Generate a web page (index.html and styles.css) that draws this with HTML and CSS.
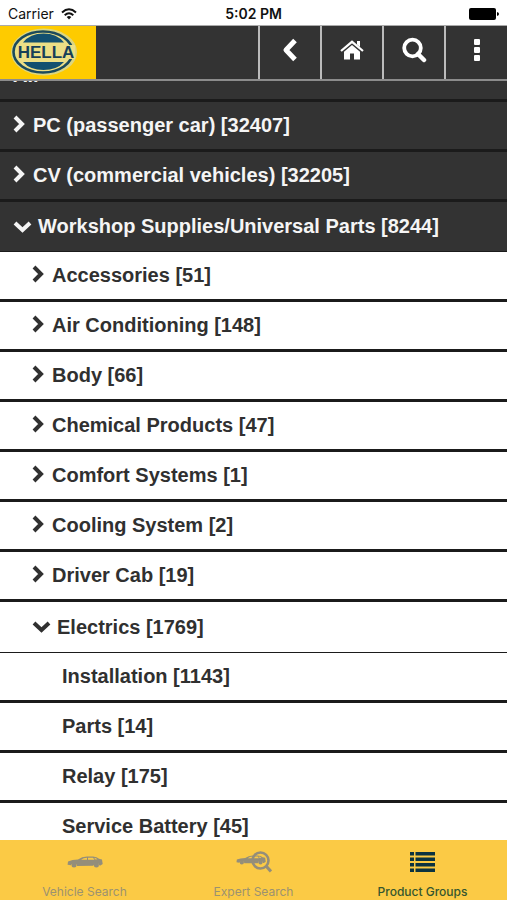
FILE: index.html
```html
<!DOCTYPE html>
<html lang="en">
<head>
<meta charset="utf-8">
<meta name="viewport" content="width=device-width, initial-scale=1">
<title>Product Groups</title>
<link rel="stylesheet" href="styles.css">
</head>
<body>
<svg width="0" height="0" class="defs" aria-hidden="true">
  <symbol id="right" viewBox="0 0 12 18"><path d="M2 2l7 7-7 7" fill="none" stroke="currentColor" stroke-width="4"/></symbol>
  <symbol id="down" viewBox="0 0 18 12"><path d="M1.500 2l7.500 7 7.500-7" fill="none" stroke="currentColor" stroke-width="4"/></symbol>
  <symbol id="car" viewBox="0 0 36 12"><path fill="currentColor" fill-rule="evenodd" d="M1 5.500Q5 3.800 11 3.600Q15 .6 20 .6H26Q30 .8 32 2.800L35 3.400L35.700 8L33.500 9.600H32.500A3.200 3.200 0 0 0 26.300 9.800L10.100 10A3.200 3.200 0 0 0 3.900 9.300L.6 8.800ZM14 3.800H20V1.700Q16.500 1.900 14 3.800ZM21 1.700V3.800H27.500L26 1.800ZM27 1.800L28.500 3.600L30.500 3.200Q29 1.900 27 1.800Z"/><circle cx="7" cy="9" r="2.500" fill="currentColor"/><circle cx="29.400" cy="9" r="2.500" fill="currentColor"/></symbol>
</svg>
<div class="status">
  <span class="carrier">Carrier
    <svg width="16" height="12" viewBox="0 0 16 12"><g fill="none" stroke="#111" stroke-width="2"><path d="M1 4.400Q8-1.800 15 4.400"/><path d="M3.700 7.200Q8 3.300 12.300 7.200"/></g><path d="M5.700 9Q8 7.200 10.300 9L8 11.500Z" fill="#111"/></svg>
  </span>
  <span class="clock">5:02 PM</span>
  <svg class="battery" width="30" height="12" viewBox="0 0 30 12"><rect x="0" y="0" width="27" height="12" rx="2"/><path d="M28 4Q30 4.500 30 6T28 8Z"/></svg>
</div>
<header class="bar">
  <a class="logo" href="#" aria-label="Hella">
    <svg width="96" height="54" viewBox="0 0 96 54">
      <ellipse cx="44" cy="26" rx="33" ry="23.500" fill="#dcd680"/>
      <ellipse cx="43" cy="26" rx="29.500" ry="20.500" fill="#ecdf86" stroke="#1b4a5c" stroke-width="2.600"/>
      <path d="M23 16.500Q30 7.500 43.500 7.500T64 16.500ZM23 36Q30 44 43.500 44T64 36Z" fill="#125070"/>
      <path d="M18 19H75V33H18Z" fill="#ecdf86"/>
      <text x="46" y="32" text-anchor="middle" class="brand">HELLA</text>
    </svg>
  </a>
  <button type="button" aria-label="Back"><svg width="18" height="24" viewBox="0 0 18 24"><path d="M14 2.500L5 12l9 9.500" fill="none" stroke="#fff" stroke-width="5" stroke-linejoin="round"/></svg></button>
  <button type="button" aria-label="Home"><svg width="24" height="20" viewBox="0 0 24 20"><path d="M1 11L12 1.800L23 11" fill="none" stroke="#fff" stroke-width="2.200"/><path d="M17 1h3v6l-3-2.500ZM12 5l8 6.700V19.500h-6V13.500h-4v6H4V11.700Z" fill="#fff"/></svg></button>
  <button type="button" aria-label="Search"><svg width="26" height="26" viewBox="0 0 26 26"><circle cx="11.500" cy="11" r="8.300" fill="none" stroke="#fff" stroke-width="3.800"/><path d="M17 17l6 6" stroke="#fff" stroke-width="4.500" stroke-linecap="round"/></svg></button>
  <button type="button" aria-label="More"><svg width="6" height="22" viewBox="0 0 6 22" fill="#fff"><rect width="6" height="6" rx="1"/><rect y="8" width="6" height="6" rx="1"/><rect y="16" width="6" height="6" rx="1"/></svg></button>
</header>
<main>
  <ul class="tree">
    <li class="top"><a href="#">All</a></li>
    <li class="top"><a href="#"><svg class="right"><use href="#right"/></svg>PC (passenger car) [32407]</a></li>
    <li class="top"><a href="#"><svg class="right"><use href="#right"/></svg>CV (commercial vehicles) [32205]</a></li>
    <li class="top open"><a href="#"><svg class="down"><use href="#down"/></svg>Workshop Supplies/Universal Parts [8244]</a>
      <ul class="group">
        <li><a href="#"><svg class="right"><use href="#right"/></svg>Accessories [51]</a></li>
        <li><a href="#"><svg class="right"><use href="#right"/></svg>Air Conditioning [148]</a></li>
        <li><a href="#"><svg class="right"><use href="#right"/></svg>Body [66]</a></li>
        <li><a href="#"><svg class="right"><use href="#right"/></svg>Chemical Products [47]</a></li>
        <li><a href="#"><svg class="right"><use href="#right"/></svg>Comfort Systems [1]</a></li>
        <li><a href="#"><svg class="right"><use href="#right"/></svg>Cooling System [2]</a></li>
        <li><a href="#"><svg class="right"><use href="#right"/></svg>Driver Cab [19]</a></li>
        <li class="open"><a href="#"><svg class="down"><use href="#down"/></svg>Electrics [1769]</a>
          <ul class="items">
            <li><a href="#">Installation [1143]</a></li>
            <li><a href="#">Parts [14]</a></li>
            <li><a href="#">Relay [175]</a></li>
            <li><a href="#">Service Battery [45]</a></li>
          </ul>
        </li>
      </ul>
    </li>
  </ul>
</main>
<nav class="tabs">
  <a href="#"><span><svg width="36" height="12"><use href="#car"/></svg></span>Vehicle Search</a>
  <a href="#"><span><svg width="36" height="22" viewBox="0 0 36 22"><use href="#car" x="0" y="4" width="30" height="10"/><circle cx="24.500" cy="9.500" r="8" fill="none" stroke="currentColor" stroke-width="2.600"/><path d="M30 15l5 5.500" stroke="currentColor" stroke-width="3.200"/></svg></span>Expert Search</a>
  <a href="#" class="current" aria-current="page"><span><svg width="25" height="20" viewBox="0 0 25 20" fill="#0c3340"><path d="M0 0h4v3.400H0ZM5.500 0H25v3.400H5.500ZM0 5.500h4v3.400H0ZM5.500 5.500H25v3.400H5.500ZM0 11h4v3.400H0ZM5.500 11H25v3.400H5.500ZM0 16.500h4V20H0ZM5.500 16.500H25V20H5.500Z"/></svg></span>Product Groups</a>
</nav>
</body>
</html>
```
FILE: styles.css
```css
* { box-sizing: border-box; }
body {
  margin: 0;
  height: 100vh;
  display: flex;
  flex-direction: column;
  overflow: hidden;
  background: #fff;
  color: #303030;
  font-family: "Liberation Sans", Arial, sans-serif;
}
a { color: inherit; text-decoration: none; }
ul { margin: 0; padding: 0; list-style: none; }
svg { display: block; flex: none; }
.defs { position: absolute; }

.status {
  flex: none;
  display: grid;
  grid-template-columns: 1fr auto 1fr;
  align-items: center;
  height: 25px;
  padding: 2px 8px 0;
  font: 14px Inter, sans-serif;
  color: #111;
}
.carrier { display: flex; align-items: center; gap: 7px; }
.clock { font-weight: 600; }
.battery { justify-self: end; fill: #000; }

.bar {
  flex: none;
  display: flex;
  height: 56px;
  background: #333;
  border-top: 1px solid #aaa;
  border-bottom: 2px solid #8c8c8c;
}
.logo { margin-right: auto; background: #fecb00; }
.brand { font: bold 17px "Liberation Sans", Arial, sans-serif; fill: #173f58; }
.bar button {
  display: flex;
  align-items: center;
  justify-content: center;
  width: 62px;
  padding: 0 0 5px;
  border: 0;
  border-left: 2px solid #bbb;
  background: none;
}
.bar button:last-child { width: 63px; }

main { flex: 1; min-height: 0; overflow: hidden; }
.tree { margin-top: -29px; font-size: 20px; font-weight: bold; }
.tree a {
  display: flex;
  align-items: center;
  gap: 8px;
  height: 50px;
  padding: 0 13px;
  border-bottom: 3px solid #1b1b1b;
}
.top > a { background: #333; color: #f5f5f5; }
.tree .open > a { gap: 6px; border-bottom-width: 1px; }
.tree .group a { padding-left: 32px; }
.tree .group .open > a { height: 51px; }
.tree .items a { padding-left: 62px; }
.right { width: 12px; height: 18px; margin-bottom: 4px; }
.down { width: 19px; height: 12px; }

.tabs {
  flex: none;
  display: grid;
  grid-template-columns: repeat(3, 1fr);
  height: 60px;
  background: #fbca45;
  color: #9b9270;
  font: 12px Inter, sans-serif;
}
.tabs a { display: flex; flex-direction: column; align-items: center; }
.tabs span { display: flex; align-items: center; height: 44px; color: #948e7a; }
.tabs .current { color: #35562f; font-weight: 500; }
```
